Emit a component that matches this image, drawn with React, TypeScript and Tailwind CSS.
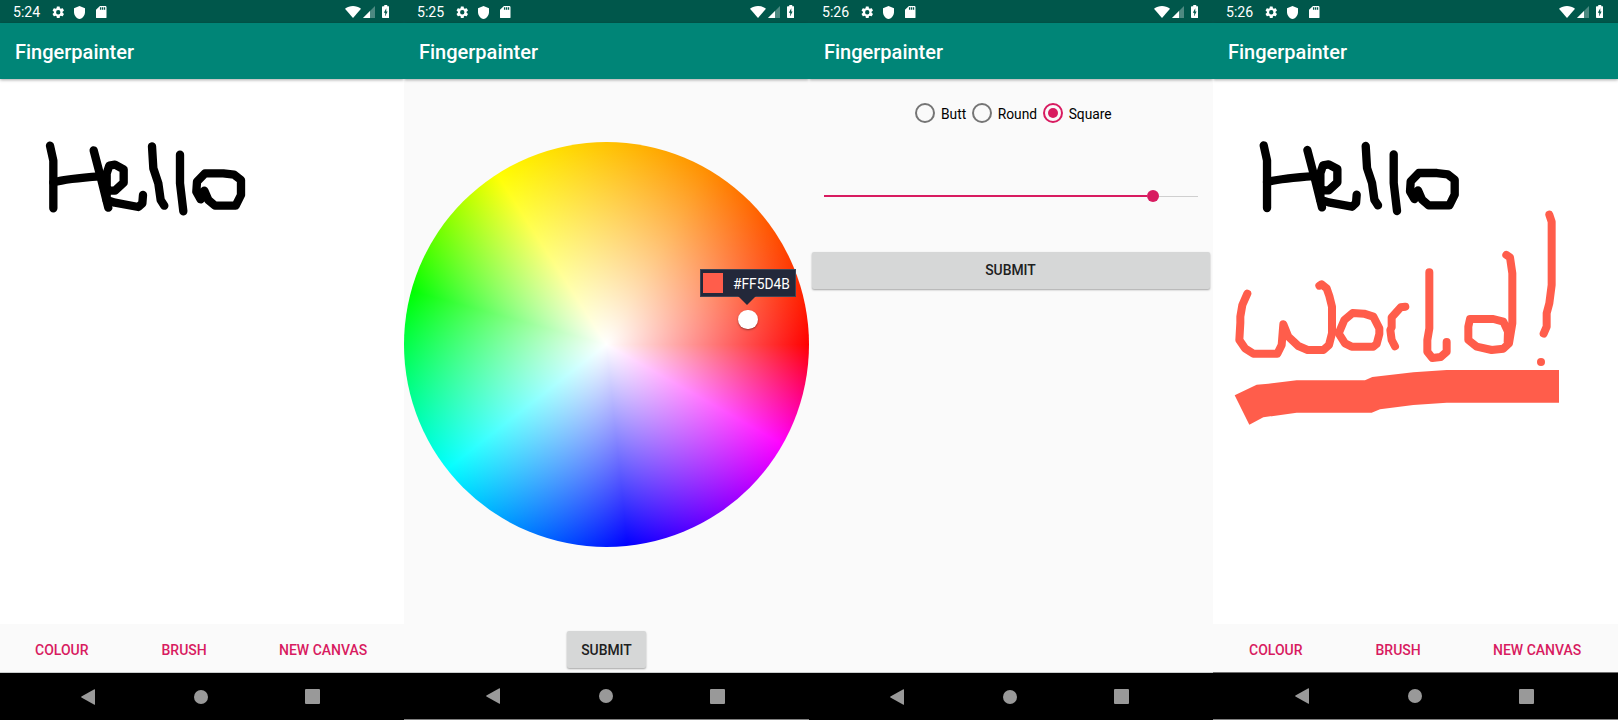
import React from "react";

function StatusBar({ time }: { time: string }) {
  return (
    <div className="flex h-[23px] shrink-0 items-center bg-[#00574b] pl-[13px] pr-[15px] text-white">
      <span className="w-[27px] whitespace-nowrap pt-[2px] text-[14.100px] leading-[23px]">{time}</span>
      <svg className="ml-[10.500px] mt-px h-[14.500px] w-[14.500px]" viewBox="0 0 24 24" fill="currentColor">
        <path d="M19.14 12.94c.04-.3.06-.61.06-.94 0-.32-.02-.64-.07-.94l2.03-1.58a.49.49 0 0 0 .12-.61l-1.92-3.32a.488.488 0 0 0-.59-.22l-2.39.96c-.5-.38-1.03-.7-1.62-.94l-.36-2.54a.484.484 0 0 0-.48-.41h-3.84c-.24 0-.43.17-.47.41l-.36 2.54c-.59.24-1.13.57-1.62.94l-2.39-.96c-.22-.08-.47 0-.59.22L2.74 8.87c-.12.21-.08.47.12.61l2.03 1.58c-.05.3-.09.63-.09.94s.02.64.07.94l-2.03 1.58a.49.49 0 0 0-.12.61l1.92 3.32c.12.22.37.29.59.22l2.39-.96c.5.38 1.03.7 1.62.94l.36 2.54c.05.24.24.41.48.41h3.84c.24 0 .44-.17.47-.41l.36-2.54c.59-.24 1.13-.56 1.62-.94l2.39.96c.22.08.47 0 .59-.22l1.92-3.32c.12-.22.07-.47-.12-.61l-2.01-1.58zM12 15.6A3.6 3.6 0 1 1 12 8.4a3.6 3.6 0 0 1 0 7.2z" />
      </svg>
      <svg className="ml-[9px] mt-px h-[13px] w-[11px]" viewBox="0 0 18 22" preserveAspectRatio="none" fill="currentColor">
        <path d="M9 0 0 4v6c0 5.550 3.840 10.740 9 12 5.160-1.260 9-6.450 9-12V4z" />
      </svg>
      <svg className="ml-[11px] mt-px h-[12.500px] w-[10.500px]" viewBox="0 0 16 20" preserveAspectRatio="none" fill="currentColor">
        <path d="M14 0H6L0 6v12c0 1.100.9 2 2 2h12c1.100 0 2-.9 2-2V2c0-1.100-.9-2-2-2zM8 6H6V2h2v4zm3 0H9V2h2v4zm3 0h-2V2h2v4z" fillRule="evenodd" />
      </svg>
      <div className="flex-1" />
      <svg className="h-[12px] w-[16px]" viewBox="0 0 16 12" fill="currentColor">
        <path d="M0 2.700C4.800-.9 11.200-.9 16 2.700L8 12z" />
      </svg>
      <svg className="ml-[1.500px] mt-px h-[12px] w-[12px]" viewBox="0 0 12 12" fill="currentColor">
        <path d="M12 0v12H0z" opacity=".3" />
        <path d="M7 5v7H0z" />
      </svg>
      <svg className="ml-[7px] h-[13px] w-[7.500px]" viewBox="0 0 10 20" preserveAspectRatio="none" fill="currentColor">
        <path fillRule="evenodd" d="M8.700 2H7V0H3v2H1.300C.6 2 0 2.600 0 3.300v15.400C0 19.400.6 20 1.300 20h7.400c.7 0 1.300-.6 1.300-1.300V3.300C10 2.600 9.400 2 8.700 2zM4.300 17V12H2.500L5.700 5V10H7.500z" />
      </svg>
    </div>
  );
}

function NavBar({ className }: { className: string }) {
  return (
    <div className={`flex h-12 shrink-0 items-center border-t bg-black text-[#999999] ${className}`}>
      <svg className="h-4 w-[14px]" viewBox="0 0 14 16" fill="currentColor">
        <path d="M13.400.2Q14 0 14 .8V15.200Q14 16 13.400 15.800L.4 8.500Q0 8 .4 7.500z" />
      </svg>
      <div className="ml-[99px] h-[14px] w-[14px] rounded-full bg-current" />
      <div className="ml-[97px] h-[15px] w-[15px] rounded-[1px] bg-current" />
    </div>
  );
}

function Screen({
  time,
  className,
  navClassName,
  children,
}: {
  time: string;
  className: string;
  navClassName: string;
  children: React.ReactNode;
}) {
  return (
    <section className={`flex h-full shrink-0 flex-col overflow-hidden bg-[#fafafa] ${className}`}>
      <StatusBar time={time} />
      <header className="relative z-10 flex h-14 shrink-0 items-center bg-[#008577] pl-[15px] pt-px text-[20px] font-medium text-white shadow-[0_1px_3px_rgba(0,0,0,0.35)]">
        Fingerpainter
      </header>
      {children}
      <NavBar className={navClassName} />
    </section>
  );
}

function HelloStrokes() {
  return (
    <g stroke="#000" strokeWidth="25">
      <path d="M150 77 160 122V265" />
      <path d="M160 187Q200 176 300 169" />
      <path d="M281 91 303 175 325 263" />
      <path d="M333 212H345L371 188V148L345 134 328 137 320 160V240L345 248 415 261 427 250 429 225" />
      <path d="M456 79 460 145 475 190 482 240 493 257" />
      <path d="M540 104V190L550 274" />
      <path d="M613 212 625 240 645 257H707L723 225V180L702 164 670 160H615L591 185 589 215 602 238" />
    </g>
  );
}

function WorldStrokes() {
  return (
    <g stroke="#ff5d4b" strokeWidth="24">
      <path d="M112 311 97 345 91 380V398L88 450 105 475 130 491H202L215 465 220 403 235 440 265 468 293 480H340L357 465 366 430V350L358 318 350 295 335 283 328 287" />
      <path d="M386 430 403 390 428 369 462 371 490 380 508 415V432L500 462 490 470H425L405 460Z" />
      <path d="M586 350 572 352 545 382V412L541 420 545 450 555 469" />
      <path d="M658 247V415L652 450V485L667 504 692 501 710 485V456" />
      <path d="M889 195 900 202 907 250V400L897 460 880 476 845 480 800 470 775 450V410L780 387H850L880 395 894 425 893 455" />
      <path d="M1018 74 1025 95V285L1018 340 1010 370V410L1001 431" />
      <circle cx="993" cy="516" r="12" fill="#ff5d4b" stroke="none" />
      <path
        fill="#ff5d4b"
        stroke="none"
        d="M74 616 140 584 175 581 260 571H465L487 561 610 547 710 540H1047V638H710L610 645 510 658 485 668H260L160 682 118 704Z"
      />
    </g>
  );
}

function Canvas({ world = false }: { world?: boolean }) {
  return (
    <>
      <svg className="min-h-0 w-full flex-1 bg-white" fill="none" strokeLinecap="round" strokeLinejoin="round">
        <g transform={world ? "translate(0.7 40.7) scale(0.33333)" : "translate(0 41) scale(0.33333)"}>
          <HelloStrokes />
        </g>
        {world && (
          <g transform="translate(-3 111) scale(0.33333)">
            <WorldStrokes />
          </g>
        )}
      </svg>
      <div
        className={`flex h-12 shrink-0 items-center pt-[4px] text-[14px] font-medium text-[#d81b60] ${
          world ? "pl-[36px]" : "pl-[35px]"
        }`}
      >
        <button className="w-[126.500px] text-left">COLOUR</button>
        <button className="w-[117.500px] text-left">BRUSH</button>
        <button className="whitespace-nowrap text-left">NEW CANVAS</button>
      </div>
    </>
  );
}

function ColourPicker() {
  return (
    <main className="flex min-h-0 flex-1 flex-col items-center pt-[63px]">
      <div className="relative h-[405px] w-[405px] shrink-0 rounded-full bg-[radial-gradient(circle_closest-side,#fff_0%,rgba(255,255,255,0)_100%),conic-gradient(from_90deg,#f00_0deg,#f0f_29.500deg,#00f_84deg,#0ff_142deg,#0f0_195.300deg,#ff0_237.200deg,#ffc300_270deg,#ff8e00_300deg,#ff4800_330deg,#f00_360deg)]">
        <div className="absolute left-[296px] top-[127px] flex h-[28px] w-[96px] items-center border border-[#3f4555] bg-[#23283a] pl-[2px] text-white">
          <span className="h-5 w-5 bg-[#ff5d4b]" />
          <span className="ml-[10px] mt-[3px] text-[13.800px]">#FF5D4B</span>
        </div>
        <svg className="absolute left-[334px] top-[154px] h-[9px] w-[18px]" viewBox="0 0 18 9">
          <path d="M0 0H18L9 9z" fill="#23283a" />
        </svg>
        <div className="absolute left-[334px] top-[167.500px] h-[19.500px] w-[19.500px] rounded-full bg-white shadow-[0_1px_2px_rgba(0,0,0,0.4)]" />
      </div>
      <button className="mt-[84px] h-[37px] w-[79px] shrink-0 rounded-[2px] bg-[#d6d7d7] pt-px text-[13.900px] font-medium text-[#202020] shadow-[0_1px_2px_rgba(0,0,0,0.35)]">
        SUBMIT
      </button>
    </main>
  );
}

function Radio({ label, checked = false }: { label: string; checked?: boolean }) {
  return (
    <label className="flex items-center gap-[6px] text-[13.800px] text-black">
      <span
        className={`flex h-5 w-5 items-center justify-center rounded-full border-2 ${
          checked ? "border-[#d81b60]" : "border-[#757575]"
        }`}
      >
        {checked && <span className="h-[10px] w-[10px] rounded-full bg-[#d81b60]" />}
      </span>
      <span className="pt-[3px]">{label}</span>
    </label>
  );
}

function BrushSettings() {
  return (
    <main className="flex min-h-0 flex-1 flex-col pt-6">
      <div className="flex h-5 items-center gap-[5.500px] pl-[106px]">
        <Radio label="Butt" />
        <Radio label="Round" />
        <Radio label="Square" checked />
      </div>
      <div className="mt-[67px] flex h-3 items-center pl-[15px]">
        <div className="h-[2px] w-[322.500px] bg-[#d81b60]" />
        <div className="h-3 w-3 rounded-full bg-[#d81b60]" />
        <div className="h-px w-[39px] bg-[#cfcfcf]" />
      </div>
      <button className="ml-[2.500px] mt-[50px] h-[36.500px] w-[398px] rounded-[2px] bg-[#d6d7d7] pt-px text-[13.900px] font-medium text-[#202020] shadow-[0_1px_2px_rgba(0,0,0,0.35)]">
        SUBMIT
      </button>
    </main>
  );
}

export default function App() {
  return (
    <div className="flex h-[720px] w-[1620px] overflow-hidden bg-white font-[Roboto,sans-serif]">
      <Screen time="5:24" className="w-[404px]" navClassName="border-t-[#c9cccc] pl-[81px]">
        <Canvas />
      </Screen>
      <Screen
        time="5:25"
        className="w-[405px]"
        navClassName="border-b border-b-[#808080] border-t-[#c9cccc] pl-[82px]"
      >
        <ColourPicker />
      </Screen>
      <Screen time="5:26" className="w-[404px]" navClassName="border-t-[#c9cccc] pl-[81px]">
        <BrushSettings />
      </Screen>
      <Screen
        time="5:26"
        className="w-[405px]"
        navClassName="border-b border-b-[#808080] border-t-[#6f6f6f] pl-[82px]"
      >
        <Canvas world />
      </Screen>
    </div>
  );
}
